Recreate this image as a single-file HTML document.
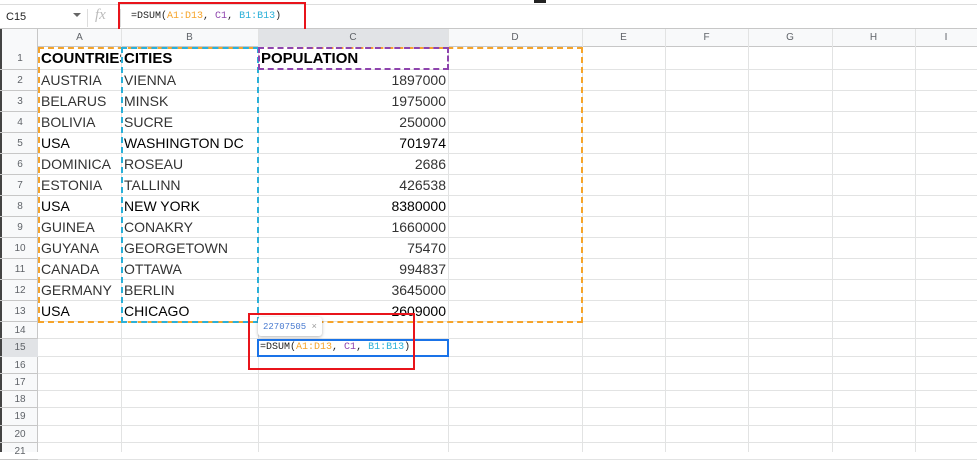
<!DOCTYPE html><html><head><style>
body{margin:0;width:977px;height:452px;overflow:hidden;background:#fff;font-family:"Liberation Sans",Arial,sans-serif;position:relative}
div{position:absolute;box-sizing:border-box}
.vl{width:1px;background:#e2e3e3}
.hl{height:1px;background:#e2e3e3}
.rh{left:2px;width:36px;text-align:center;font-size:10px;color:#5f6368}
.ch{top:29px;height:18px;text-align:center;font-size:10px;color:#5f6368;line-height:18px}
.t{font-size:14px;color:#333;line-height:21px;white-space:nowrap;overflow:hidden}
.n{text-align:right}
.mono{font-family:"Liberation Mono",monospace}
</style></head><body>
<div style="left:0;top:0;width:977px;height:5px;background:#fff;border-bottom:1px solid #ddd"></div>
<div style="left:534px;top:0;width:12px;height:3px;background:#222"></div>
<!-- formula bar -->
<div style="left:0;top:5px;width:977px;height:24px;background:#fff;border-bottom:1px solid #c7c7c7"></div>
<div style="left:6px;top:11px;font-size:11px;color:#222">C15</div>
<div style="left:73px;top:13px;width:0;height:0;border-left:4px solid transparent;border-right:4px solid transparent;border-top:4px solid #666"></div>
<div style="left:87px;top:9px;width:1px;height:18px;background:#ddd"></div>
<div style="left:95px;top:7px;font-size:15px;color:#bbb;font-style:italic;font-family:'Liberation Serif',serif">fx</div>
<div style="left:120px;top:9px;width:1px;height:18px;background:#ddd"></div>
<div class="mono" style="left:131px;top:11px;font-size:10px;color:#222">=DSUM(<span style="color:#f6a42a">A1:D13</span>, <span style="color:#8e44ad">C1</span>, <span style="color:#2ab0d8">B1:B13</span>)</div>
<div style="left:118px;top:2px;width:188px;height:32px;border:2px solid #e8141b"></div>
<!-- header row -->
<div style="left:0;top:29px;width:977px;height:18px;background:#f8f9fa;border-bottom:1px solid #c7c7c7"></div>
<div style="left:0;top:29px;width:38px;height:423px;background:#f8f9fa;border-right:1px solid #c7c7c7"></div>
<div style="left:0;top:29px;width:2px;height:423px;background:#444"></div>
<div class="ch" style="left:38px;width:83px">A</div>
<div class="ch" style="left:121px;width:137px">B</div>
<div class="ch" style="left:258px;width:190px">C</div>
<div class="ch" style="left:448px;width:134px">D</div>
<div class="ch" style="left:582px;width:83px">E</div>
<div class="ch" style="left:665px;width:83px">F</div>
<div class="ch" style="left:748px;width:84px">G</div>
<div class="ch" style="left:832px;width:83px">H</div>
<div class="ch" style="left:915px;width:62px">I</div>
<div style="left:258px;top:29px;width:190px;height:18px;background:#e1e3e6"></div>
<div class="ch" style="left:258px;width:190px">C</div>
<!-- vertical lines -->
<div class="vl" style="left:121px;top:29px;height:423px"></div>
<div class="vl" style="left:258px;top:29px;height:423px"></div>
<div class="vl" style="left:448px;top:29px;height:423px"></div>
<div class="vl" style="left:582px;top:29px;height:423px"></div>
<div class="vl" style="left:665px;top:29px;height:423px"></div>
<div class="vl" style="left:748px;top:29px;height:423px"></div>
<div class="vl" style="left:832px;top:29px;height:423px"></div>
<div class="vl" style="left:915px;top:29px;height:423px"></div>
<!-- rows -->
<div id="rows"></div>
<script>
var tops=[48,70,91,112,133,154,175,196,217,238,259,280,301,322,339,357,374,391,408,426,443,460];
var h='';
for(var i=0;i<21;i++){var y=tops[i],hh=tops[i+1]-y;
h+='<div class="hl" style="left:38px;top:'+(tops[i+1]-1)+'px;width:939px"></div>';
h+='<div class="hl" style="left:0;top:'+(tops[i+1]-1)+'px;width:38px;background:#c7c7c7"></div>';
h+='<div class="rh" style="top:'+y+'px;height:'+hh+'px;line-height:'+hh+'px;'+(i==14?'background:#e1e3e6':'')+'">'+(i+1)+'</div>';}
var d=[["COUNTRIES","CITIES","POPULATION"],["AUSTRIA","VIENNA","1897000"],["BELARUS","MINSK","1975000"],["BOLIVIA","SUCRE","250000"],["USA","WASHINGTON DC","701974"],["DOMINICA","ROSEAU","2686"],["ESTONIA","TALLINN","426538"],["USA","NEW YORK","8380000"],["GUINEA","CONAKRY","1660000"],["GUYANA","GEORGETOWN","75470"],["CANADA","OTTAWA","994837"],["GERMANY","BERLIN","3645000"],["USA","CHICAGO","2609000"]];
for(var r=0;r<13;r++){var y=tops[r],hh=tops[r+1]-y,b=r==0?'font-weight:bold;color:#000;font-size:15px;':'';
var c=(d[r][0]=='USA'||r==0)?'color:#000;':'';
h+='<div class="t" style="'+b+c+'left:41px;top:'+y+'px;width:80px;height:'+hh+'px;line-height:'+hh+'px">'+d[r][0]+'</div>';
h+='<div class="t" style="'+b+c+'left:124px;top:'+y+'px;width:133px;height:'+hh+'px;line-height:'+hh+'px">'+d[r][1]+'</div>';
h+='<div class="t'+(r?' n':'')+'" style="'+b+c+'left:'+(r?258:261)+'px;top:'+y+'px;width:'+(r?188:186)+'px;height:'+hh+'px;line-height:'+hh+'px">'+d[r][2]+'</div>';}
document.getElementById('rows').innerHTML=h;
</script>
<!-- dashed ranges -->
<div style="left:38px;top:47px;width:545px;height:276px;border:2px dashed #f6a42a"></div>
<div style="left:121px;top:47px;width:138px;height:276px;border:2px dashed #2ab0d8"></div>
<div style="left:258px;top:47px;width:191px;height:23px;border:2px dashed #8e44ad"></div>
<!-- active cell -->
<div style="left:257px;top:339px;width:192px;height:18px;border:2px solid #1a73e8;background:#fff"></div>
<div class="mono" style="left:260px;top:341px;font-size:10px;color:#222;line-height:14px">=DSUM(<span style="color:#f6a42a">A1:D13</span>, <span style="color:#8e44ad">C1</span>, <span style="color:#2ab0d8">B1:B13</span>)</div>
<div style="left:258px;top:317px;width:64px;height:19px;background:#fff;border-radius:3px;box-shadow:0 1px 3px rgba(0,0,0,.3)"></div>
<div class="mono" style="left:263px;top:321px;font-size:9px;color:#4a7bd0">22707505 <span style="color:#999;font-family:'Liberation Sans'">×</span></div>
<div style="left:248px;top:313px;width:167px;height:57px;border:2px solid #e8141b"></div>
</body></html>
